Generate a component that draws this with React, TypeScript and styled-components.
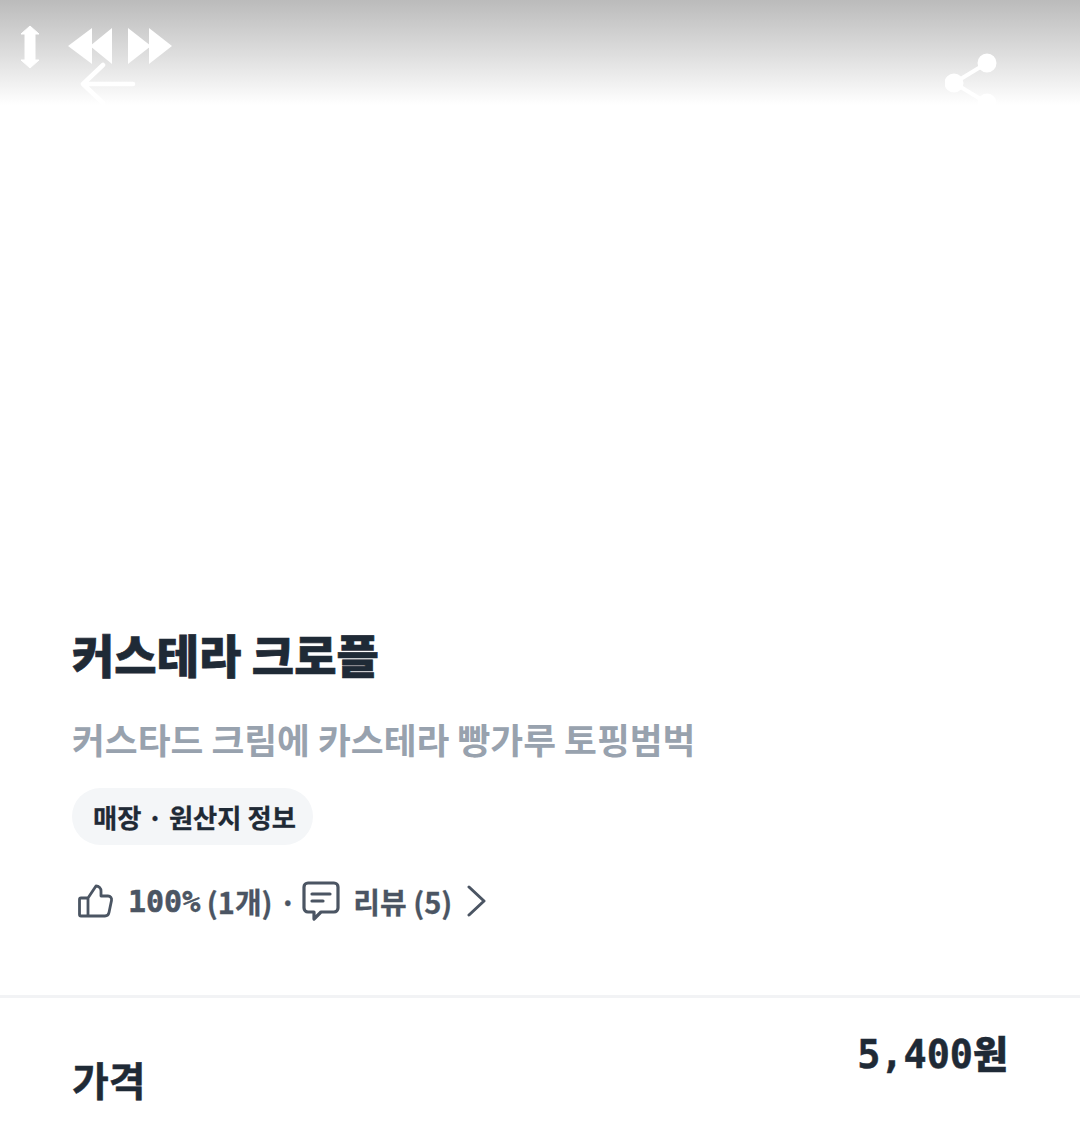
import * as React from "react";
import styled, { createGlobalStyle } from "styled-components";

const KR = `"Noto Sans CJK KR", "Noto Sans", sans-serif`;
const MONO = `"DejaVu Sans Mono", "Liberation Mono", monospace`;

const GlobalStyle = createGlobalStyle`
  html, body {
    margin: 0;
    padding: 0;
    background: #fff;
  }
  body {
    font-family: ${KR};
  }
`;

const Page = styled.div`
  width: 1080px;
  height: 1144px;
  overflow: hidden;
  background: #fff;
`;

const Hero = styled.div`
  height: 619px;
  background: linear-gradient(#bbbbbb 0, #dedede 55px, #ffffff 105px);
  background-repeat: no-repeat;
`;

const StatusBar = styled.div`
  height: 52px;
  box-sizing: border-box;
  padding: 25px 0 0 20px;
  display: flex;
  align-items: flex-start;
  gap: 28px;
`;

const NavBar = styled.div`
  display: flex;
  justify-content: space-between;
  align-items: flex-start;
  padding: 0 83px 0 80px;
`;

const BackIcon = styled.svg`
  margin-top: 10px;
`;

const Info = styled.section`
  padding: 0 72px;
  height: 376px;
  box-sizing: border-box;
`;

const Title = styled.h1`
  margin: 0;
  font-size: 46px;
  line-height: 68px;
  font-weight: 900;
  color: #1f2a36;
  -webkit-text-stroke: 0.7px #1f2a36;
`;

const Subtitle = styled.p`
  margin: 28px 0 0;
  font-size: 35.7px;
  line-height: 48px;
  font-weight: 700;
  color: #98a2ae;
`;

const Chip = styled.div`
  margin-top: 25px;
  display: inline-flex;
  align-items: center;
  height: 57px;
  padding: 0 17px 0 21px;
  border-radius: 29px;
  background: #f4f6f8;
  font-size: 26.300px;
  font-weight: 700;
  color: #1f2a36;
  -webkit-text-stroke: 0.3px #1f2a36;
  white-space: pre;
`;

const Meta = styled.div`
  margin-top: 35px;
  display: flex;
  align-items: center;
  height: 42px;
  padding-left: 6px;
  font-size: 29px;
  font-weight: 700;
  color: #4b5563;
  -webkit-text-stroke: 0.3px #4b5563;
  white-space: pre;
`;

const Digits = styled.span<{ $size: number }>`
  font-family: ${MONO};
  font-size: ${(p) => p.$size}px;
  font-weight: 700;
  -webkit-text-stroke: 0.5px currentColor;
`;

const MetaText = styled.span<{ $gap: number }>`
  margin-left: ${(p) => p.$gap}px;
  display: inline-flex;
  align-items: center;
`;

const Divider = styled.hr`
  margin: 0;
  border: 0;
  height: 3px;
  background: #f2f3f5;
`;

const PriceRow = styled.div`
  display: flex;
  justify-content: space-between;
  align-items: flex-start;
  padding: 25px 72px 0;
`;

const PriceLabel = styled.div`
  margin-top: 27px;
  font-size: 40px;
  line-height: 58px;
  font-weight: 700;
  color: #1f2a36;
  -webkit-text-stroke: 0.5px #1f2a36;
`;

const Price = styled.div`
  font-size: 38px;
  line-height: 58px;
  font-weight: 900;
  color: #1f2a36;
  -webkit-text-stroke: 0.5px #1f2a36;
`;

const App = () => (
  <Page>
    <GlobalStyle />
    <Hero>
      <StatusBar>
        <svg width="20" height="44" viewBox="0 0 20 44" fill="#fff" stroke="#fff" strokeWidth="1" strokeLinejoin="round">
          <path d="M10 1l9 8h-4v26h4l-9 8-9-8h4V9H1z" />
        </svg>
        <svg width="104" height="40" viewBox="0 0 104 40" fill="#fff">
          <path d="M0 21L24 3v36zM22 21L44 3v36zM60 3l23 18-23 18zM81 3l23 18-23 18z" />
        </svg>
      </StatusBar>
      <NavBar>
        <BackIcon width="56" height="44" viewBox="0 0 56 44" fill="none" stroke="#fff" strokeWidth="4.500" strokeLinecap="round" strokeLinejoin="round">
          <path d="M53 22H3M23 3L3 22l20 19" />
        </BackIcon>
        <svg width="52" height="60" viewBox="0 0 52 60" fill="#fff" stroke="#fff" strokeWidth="4">
          <circle cx="42" cy="11" r="7.500" />
          <circle cx="9" cy="31" r="7.500" />
          <circle cx="42" cy="51" r="7.500" />
          <path d="M42 11L9 31l33 20" fill="none" />
        </svg>
      </NavBar>
    </Hero>
    <Info>
      <Title>커스테라 크로플</Title>
      <Subtitle>커스타드 크림에 카스테라 빵가루 토핑범벅</Subtitle>
      <Chip>매장 · 원산지 정보</Chip>
      <Meta>
        <svg width="36" height="34" viewBox="0 0 36 34" fill="none" stroke="#4b5563" strokeWidth="2.800" strokeLinejoin="round" strokeLinecap="round">
          <path d="M10 14v18H3a1.500 1.500 0 0 1-1.500-1.500v-15A1.500 1.500 0 0 1 3 14h7zM10 14l8-12c3 0 5 2 5 5v5h7c2.500 0 4 2 3.500 4.500l-2.500 12c-.4 2-2 3.500-4 3.500H10" />
        </svg>
        <MetaText $gap={14}>
          <Digits $size={30}>100%</Digits> (1개) ·
        </MetaText>
        <MetaText $gap={6}>
          <svg width="38" height="40" viewBox="0 0 38 40" fill="none" stroke="#4b5563" strokeWidth="3.200" strokeLinejoin="round" strokeLinecap="round">
            <path d="M6 2h26a4 4 0 0 1 4 4v21a4 4 0 0 1-4 4H19l-7 7v-7H6a4 4 0 0 1-4-4V6a4 4 0 0 1 4-4z" />
            <path d="M10 13h18M10 20h11" />
          </svg>
        </MetaText>
        <MetaText $gap={13}>리뷰 (5)</MetaText>
        <MetaText $gap={15}>
          <svg width="19" height="32" viewBox="0 0 19 32" fill="none" stroke="#4b5563" strokeWidth="3" strokeLinecap="round" strokeLinejoin="round">
            <path d="M2 2l15 14L2 30" />
          </svg>
        </MetaText>
      </Meta>
    </Info>
    <Divider />
    <PriceRow>
      <PriceLabel>가격</PriceLabel>
      <Price>
        <Digits $size={38.500}>5,400</Digits>원
      </Price>
    </PriceRow>
  </Page>
);

export default App;
